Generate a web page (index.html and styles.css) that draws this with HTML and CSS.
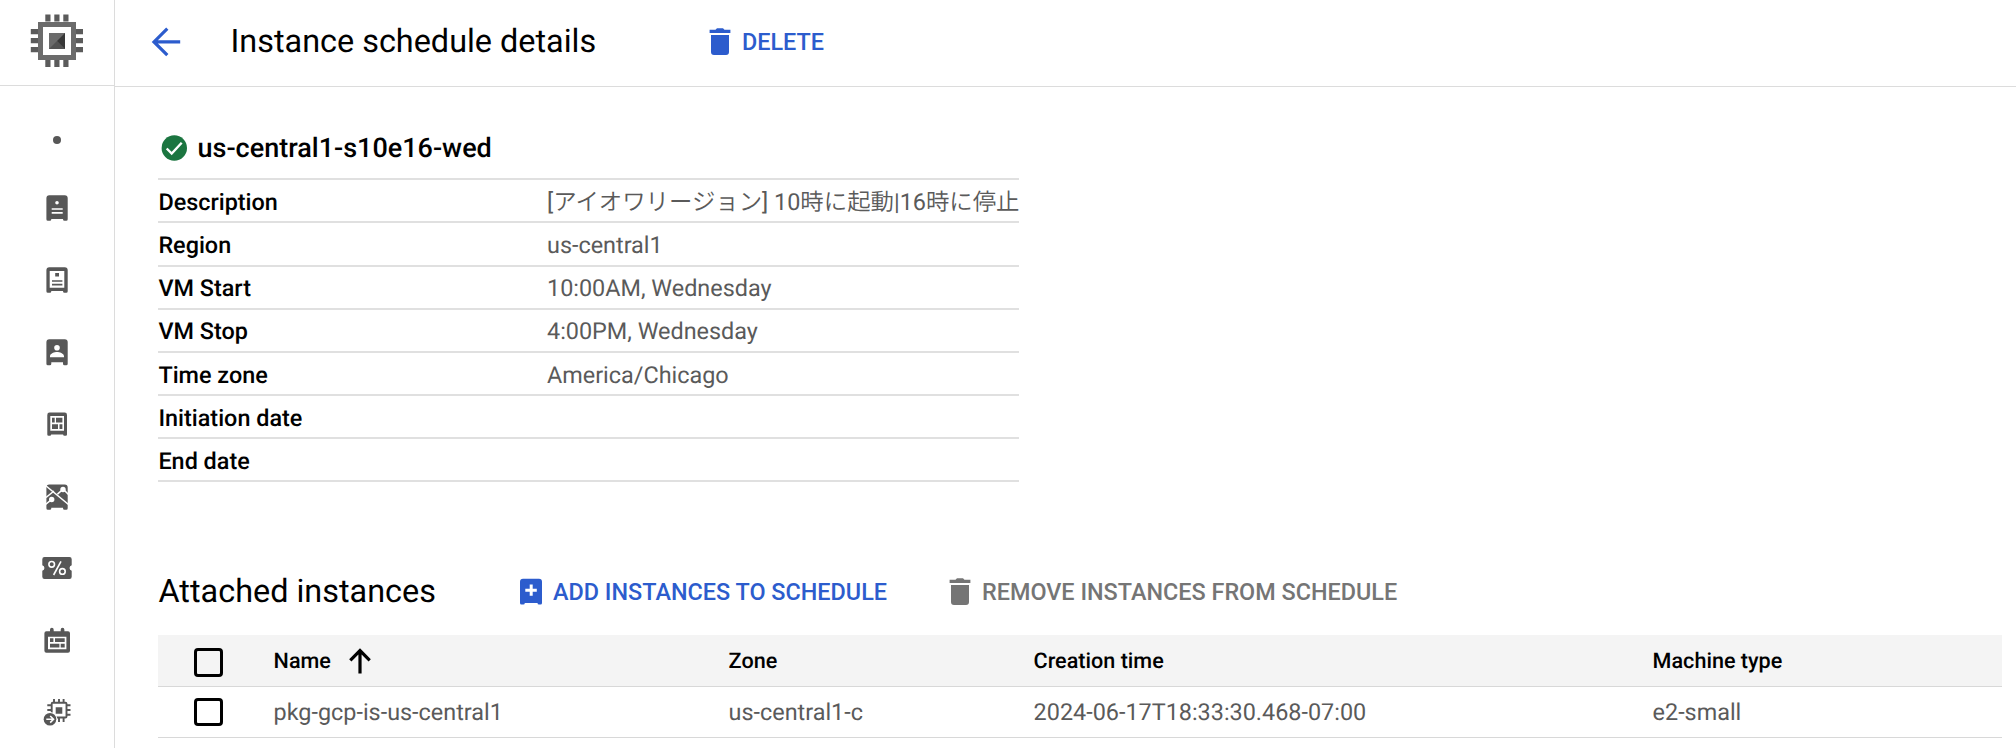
FILE: index.html
```html
<!DOCTYPE html>
<html lang="en">
<head>
<meta charset="utf-8">
<title>Instance schedule details</title>
<link rel="stylesheet" href="styles.css">
</head>
<body>
<div class="app">
  <aside class="sidebar">
    <div class="product">
      <svg width="54" height="54" viewBox="0 0 54 54">
        <path fill="#5b5b5b" d="M15.3.5h5.2v7h-5.2zM24.300.5h5.2v7h-5.2zM33.300.5h5.2v7h-5.2zM15.300 46h5.2v7h-5.2zM24.300 46h5.2v7h-5.2zM33.300 46h5.2v7h-5.2zM.8 15h7.500v5.2H.8zM.8 24h7.500v5.2H.8zM.8 33h7.500v5.2H.8zM46 15h7v5.2h-7zM46 24h7v5.2h-7zM46 33h7v5.2h-7z"/>
        <path fill="#6b6b6b" fill-rule="evenodd" d="M8 8h38v38H8zM13 13v28h28V13z"/>
        <path fill="#6b6b6b" d="M19 19h16v16H19z"/>
        <path fill="#535353" d="M27 27l8 8H19z"/>
        <path fill="#383838" d="M35 19v16l-8-8z"/>
      </svg>
    </div>
    <nav class="nav">
      <a class="nav-item nav-item-dot"><span class="dot"></span></a>
      <a class="nav-item"><svg class="nav-icon" viewBox="0 0 30 30"><path fill-rule="evenodd" d="M7.300 2.300h15.400a3 3 0 0 1 3 3v21a1.500 1.500 0 0 1-1.500 1.500h-1.700a1.500 1.500 0 0 1-1.500-1.500V26H9.300v.3a1.500 1.500 0 0 1-1.500 1.500H5.900a1.500 1.500 0 0 1-1.500-1.500v-21a3 3 0 0 1 2.900-3zM15 7.900a1.800 1.800 0 1 0 0 3.600 1.800 1.800 0 0 0 0-3.600zM9.700 15.200v1.600h11v-1.600zM9.700 19v1.700h11V19z"/></svg></a>
      <a class="nav-item"><svg class="nav-icon" viewBox="0 0 30 30"><path fill-rule="evenodd" d="M7.300 2.300h15.400a3 3 0 0 1 3 3v21a1.500 1.500 0 0 1-1.500 1.500h-1.700a1.500 1.500 0 0 1-1.500-1.500V26H9.300v.3a1.500 1.500 0 0 1-1.500 1.500H5.900a1.500 1.500 0 0 1-1.500-1.500v-21a3 3 0 0 1 2.900-3zM7.700 6v16.700h14.600V6z"/><path d="M13.200 7.900H17v3.600h-3.800zM10 15.200h10.400v1.500H10zM10 18.800h10.400v1.600H10z"/></svg></a>
      <a class="nav-item"><svg class="nav-icon" viewBox="0 0 30 30"><path fill-rule="evenodd" d="M7.300 2.300h15.400a3 3 0 0 1 3 3v21.500a1.500 1.500 0 0 1-1.500 1.500h-1.700a1.500 1.500 0 0 1-1.500-1.500v-1.500H9.300v1.500a1.500 1.500 0 0 1-1.500 1.500H5.900a1.500 1.500 0 0 1-1.500-1.500V5.300a3 3 0 0 1 2.900-3zM15 8a2.800 2.800 0 1 0 0 5.600A2.800 2.800 0 0 0 15 8zM8 20.300h14v-1.100c0-2.800-4.600-4.200-7-4.200s-7 1.400-7 4.200z"/></svg></a>
      <a class="nav-item"><svg class="nav-icon" viewBox="0 0 30 30"><path fill-rule="evenodd" d="M7.500 3.600h15.200a2.300 2.300 0 0 1 2.300 2.300v19.500a1.300 1.300 0 0 1-1.300 1.300h-1.200a1.400 1.400 0 0 1-1.400-1.300H9.200a1.400 1.400 0 0 1-1.400 1.300H6.600a1.300 1.300 0 0 1-1.300-1.300V5.900a2.300 2.300 0 0 1 2.200-2.300zM8.300 7v14.700H22V7z"/><path d="M10 8.700h2.700v4.700H10zM14 8.700h6.400v4.700H14zM10 15.200h6V20h-6zM17.500 15.200h2.900V20h-2.900z"/></svg></a>
      <a class="nav-item"><svg class="nav-icon" viewBox="0 0 30 30"><path d="M7.300 3.500h15.400a3 3 0 0 1 3 3v20.700a1.500 1.500 0 0 1-1.500 1.500h-1.700a1.500 1.500 0 0 1-1.500-1.500V26.800H9.300v.4a1.500 1.500 0 0 1-1.500 1.500H5.900a1.500 1.500 0 0 1-1.500-1.500V6.500a3 3 0 0 1 2.900-3z"/><g stroke="#fff" stroke-width="1.600" fill="none"><path d="M3.500 4.500L26.500 23.500M20.700 8.500L15.500 13.200M22 9l4.500 4.500M9.500 18.700L3.500 23.500M4 16.500l8-6.500"/></g><circle cx="21" cy="8.500" r="2.700" fill="#fff"/><circle cx="9.700" cy="18.500" r="2.700" fill="#fff"/></svg></a>
      <a class="nav-item"><svg class="nav-icon" viewBox="0 0 30 30"><path d="M2.500 4h25a2.200 2.200 0 0 1 2.200 2.200v6a2.900 2.900 0 0 0 0 5.600v6a2.200 2.200 0 0 1-2.200 2.200h-25A2.200 2.200 0 0 1 .3 23.800v-6a2.900 2.900 0 0 0 0-5.600v-6A2.200 2.200 0 0 1 2.500 4z"/><g stroke="#fff" stroke-width="1.600" fill="none"><circle cx="9.700" cy="11.300" r="2.800"/><circle cx="20.400" cy="18.400" r="2.800"/><path d="M19 8.300L11.600 22"/></g></svg></a>
      <a class="nav-item"><svg class="nav-icon" viewBox="0 0 30 30"><path fill-rule="evenodd" d="M8 6.300V4.700a1.800 1.800 0 0 1 3.700 0v1.600h7V4.700a1.800 1.800 0 0 1 3.700 0v1.600h3.600a2 2 0 0 1 2 2v17.500a2 2 0 0 1-2 2H4.400a2 2 0 0 1-2-2V8.300a2 2 0 0 1 2-2zM6 11.700v12.600h18.400V11.700z"/><path d="M8 13.300h3.400V17H8zM13 13.300h9.700V17H13zM8 18.800h9.400v3.600H8zM18.700 18.800h4v3.600h-4z"/></svg></a>
      <a class="nav-item"><svg class="nav-icon" viewBox="0 0 30 30"><g fill="none" stroke="#575757" stroke-width="1.900"><rect x="9.700" y="5.700" width="14.800" height="14.800" rx="1"/><path d="M12 2v4M17 2v4M21.600 2v4M17 20.500V25M21.600 20.500V25M5.300 8.300h4M5.300 13h4M24.500 8.300h4M24.500 13h4M24.500 17.700h4"/></g><path d="M13.700 10.300h6.600v6.500h-6.600z"/><circle cx="8" cy="22.300" r="7.200" fill="#fff"/><circle cx="8" cy="22.300" r="6.300"/><path d="M4.300 22.300h6.500M8.200 19l3.300 3.300-3.300 3.300" fill="none" stroke="#fff" stroke-width="1.600"/></svg></a>
    </nav>
  </aside>
  <main class="main">
    <header class="header">
      <svg class="back" width="32" height="32" viewBox="0 0 32 32"><path d="M16.300 2.700L3 15.900l13.300 13.200M3 15.900h26.200" fill="none" stroke="#2c5ccd" stroke-width="3.200"/></svg>
      <h1 class="title">Instance schedule details</h1>
      <button class="action action-delete"><svg class="action-icon" viewBox="0 0 22 27"><path d="M6.500 1.800L8 .3h6l1.500 1.500h5.900v3.300H.6V1.800zM2 7h18v17a3 3 0 0 1-3 3H5a3 3 0 0 1-3-3z"/></svg>DELETE</button>
    </header>
    <section class="content">
      <div class="name">
        <svg width="26" height="26" viewBox="0 0 26 26"><circle cx="13.300" cy="13" r="12.700" fill="#1b7540"/><path d="M5.700 13.500l5 5 10-10.700" fill="none" stroke="#fff" stroke-width="2.400"/></svg>
        <h2 class="name-text">us-central1-s10e16-wed</h2>
      </div>
      <dl class="details">
        <div class="detail"><dt>Description</dt><dd>[アイオワリージョン] 10時に起動|16時に停止</dd></div>
        <div class="detail detail-tall"><dt>Region</dt><dd>us-central1</dd></div>
        <div class="detail detail-tight"><dt>VM Start</dt><dd>10:00AM, Wednesday</dd></div>
        <div class="detail detail-tight"><dt>VM Stop</dt><dd>4:00PM, Wednesday</dd></div>
        <div class="detail"><dt>Time zone</dt><dd>America/Chicago</dd></div>
        <div class="detail"><dt>Initiation date</dt><dd></dd></div>
        <div class="detail"><dt>End date</dt><dd></dd></div>
      </dl>
      <div class="toolbar">
        <h2 class="toolbar-title">Attached instances</h2>
        <button class="action action-add"><svg class="action-icon" viewBox="0 0 22 27"><path fill-rule="evenodd" d="M3 .7h16a3 3 0 0 1 3 3V25a1.500 1.500 0 0 1-1.500 1.500H19A1.500 1.500 0 0 1 17.500 25H4.800a1.500 1.500 0 0 1-1.500 1.500H1.500A1.500 1.500 0 0 1 0 25V3.700a3 3 0 0 1 3-3zM9.700 6.500v4.200H5.300v3h4.400v4.100h3v-4.100h4.100v-3h-4.100V6.500z"/></svg>ADD INSTANCES TO SCHEDULE</button>
        <button class="action action-remove"><svg class="action-icon" viewBox="0 0 22 27"><path d="M6.500 1.800L8 .3h6l1.500 1.500h5.900v3.300H.6V1.800zM2 7h18v17a3 3 0 0 1-3 3H5a3 3 0 0 1-3-3z"/></svg>REMOVE INSTANCES FROM SCHEDULE</button>
      </div>
      <div class="table">
        <div class="row row-head">
          <span class="cell"><span class="checkbox checkbox-head"></span></span>
          <span class="cell">Name <svg class="sort" viewBox="0 0 24 26"><path d="M12 25.500V3M2.300 12.300L12 2.600l9.700 9.700" fill="none" stroke="#000" stroke-width="3.200"/></svg></span>
          <span class="cell">Zone</span>
          <span class="cell">Creation time</span>
          <span class="cell">Machine type</span>
        </div>
        <div class="row">
          <span class="cell"><span class="checkbox"></span></span>
          <span class="cell">pkg-gcp-is-us-central1</span>
          <span class="cell">us-central1-c</span>
          <span class="cell">2024-06-17T18:33:30.468-07:00</span>
          <span class="cell">e2-small</span>
        </div>
      </div>
    </section>
  </main>
</div>
</body>
</html>
```
FILE: styles.css
```css
* { box-sizing: border-box; }

body {
  margin: 0;
  background: #fff;
  color: #000;
  font-family: Roboto, "Noto Sans CJK JP DemiLight", "Noto Sans CJK JP", sans-serif;
  font-size: 23.4px;
  text-rendering: geometricPrecision;
}

h1, h2, dl, dd { margin: 0; font-weight: 400; }

.app { display: flex; height: 748px; overflow: hidden; }

.sidebar {
  flex: none;
  width: 115px;
  border-right: 1px solid #dcdcdc;
}

.product {
  display: flex;
  justify-content: center;
  height: 86px;
  padding-top: 14px;
  border-bottom: 1px solid #dcdcdc;
}

.nav { padding-top: 22px; }

.nav-item {
  display: flex;
  align-items: center;
  justify-content: center;
  height: 72px;
}

.nav-item-dot { height: 64px; }

.dot {
  width: 8px;
  height: 8px;
  border-radius: 50%;
  background: #575757;
}

.nav-icon { width: 30px; height: 30px; fill: #575757; }

.main { flex: 1; min-width: 0; }

.header {
  display: flex;
  align-items: center;
  height: 87px;
  padding: 0 0 2px 35.5px;
  border-bottom: 1px solid #dcdcdc;
}

.back { flex: none; margin-right: 48px; }

.title {
  width: 478.5px;
  font-size: 32.4px;
  line-height: 40px;
  padding-bottom: 2px;
}

.action {
  display: flex;
  align-items: center;
  padding: 0;
  border: 0;
  background: none;
  color: #2c5ccd;
  font: inherit;
  font-weight: 500;
  line-height: 40px;
  white-space: nowrap;
}

.action-icon {
  width: 22px;
  height: 27px;
  margin-right: 11px;
  fill: currentColor;
}

.action-delete .action-icon { margin-bottom: 2px; }

.content { padding: 41px 14px 0 43px; }

.name { display: flex; align-items: center; height: 40px; padding-left: 3px; }

.name-text {
  margin-left: 10.5px;
  font-size: 27px;
  font-weight: 500;
  line-height: 40px;
}

.details {
  width: 861px;
  margin-top: 10px;
  border-top: 2px solid #e0e0e0;
}

.detail {
  display: grid;
  grid-template-columns: 389px 1fr;
  height: 43px;
  border-bottom: 2px solid #e0e0e0;
  line-height: 45px;
  white-space: nowrap;
}

.detail-tall { height: 44px; }

.detail-tight { line-height: 43px; }

.detail dt { padding-left: 0.4px; font-weight: 500; }

.detail dd { height: 41px; color: #5a5a5a; }

.toolbar {
  display: flex;
  align-items: center;
  height: 40px;
  margin-top: 89px;
}

.toolbar-title {
  width: 362px;
  padding-left: 0.5px;
  font-size: 32.4px;
  line-height: 40px;
}

.toolbar .action { padding-top: 2px; }

.toolbar .action-icon { margin-bottom: 2px; }

.action-add { width: 429px; }

.action-remove { color: #757575; }

.table { margin-top: 24px; }

.row {
  display: grid;
  grid-template-columns: 115.6px 455px 305px 619px 1fr;
  height: 51px;
  border-bottom: 1px solid #d8d8d8;
  color: #5a5a5a;
}

.row-head {
  height: 52px;
  background: #f4f4f4;
  color: #000;
  font-size: 21.6px;
  font-weight: 500;
}

.cell { display: flex; align-items: center; }

.row-head .cell { padding-top: 2px; }

.checkbox {
  width: 29px;
  height: 28px;
  margin-left: 36px;
  border: 3px solid #000;
  border-radius: 4px;
}

.checkbox-head { height: 29px; margin-top: 2px; }

.sort { width: 24px; height: 26px; margin: 0 0 2px 17px; }
```
